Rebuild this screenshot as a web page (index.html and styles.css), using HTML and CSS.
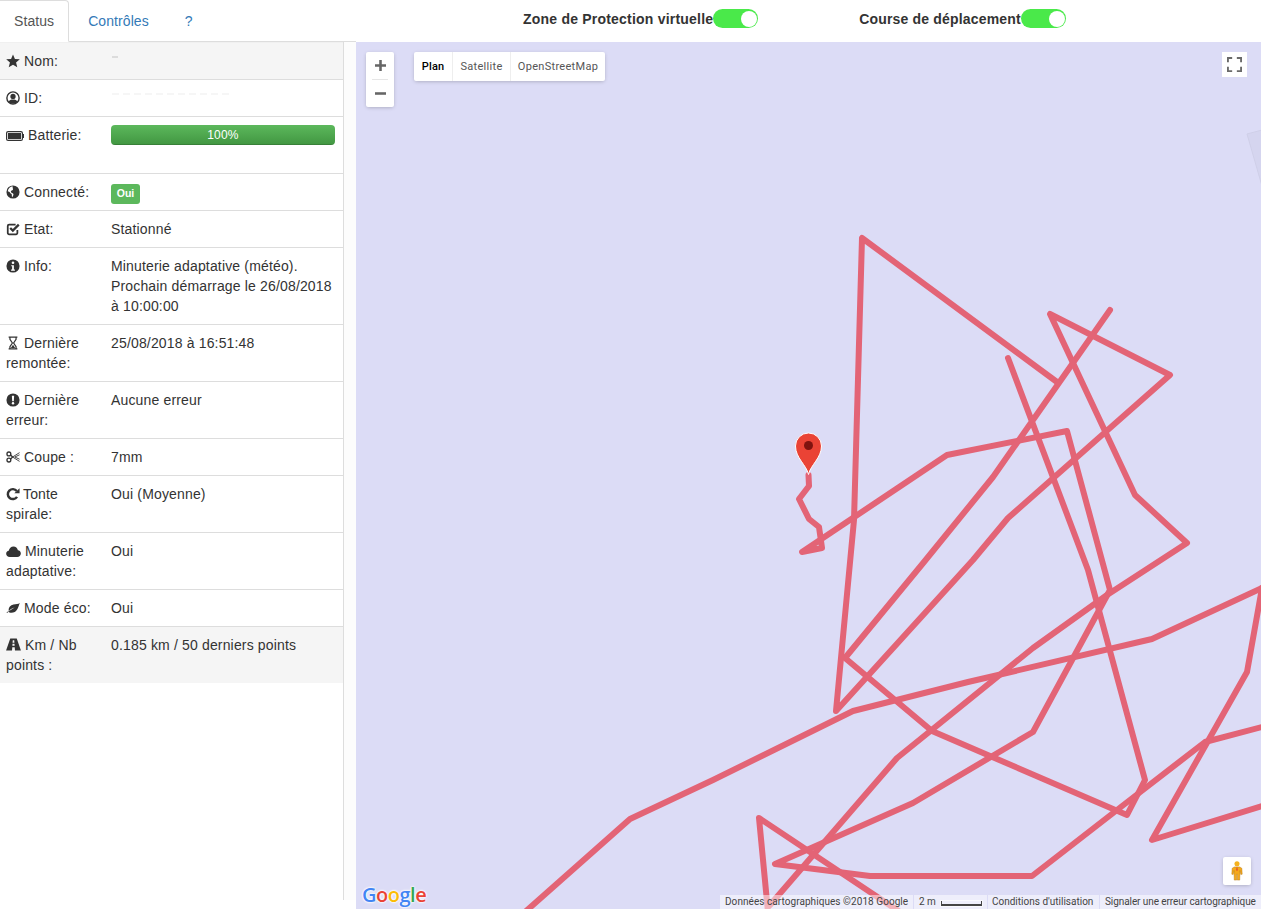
FILE: index.html
```html
<!DOCTYPE html>
<html lang="fr">
<head>
<meta charset="utf-8">
<title>Status</title>
<link rel="stylesheet" href="styles.css">
</head>
<body>
<div class="app">
  <nav class="tabs">
    <a class="tab active">Status</a>
    <a class="tab">Contrôles</a>
    <a class="tab">?</a>
  </nav>
  <header class="switches">
    <div class="switch-item"><b>Zone de Protection virtuelle</b><span class="toggle"><i></i></span></div>
    <div class="switch-item"><b class="tight">Course de déplacement</b><span class="toggle"><i></i></span></div>
  </header>
  <aside class="side">
    <table class="status">
      <tr class="shaded"><td class="key"><svg class="ic" viewBox="0 0 16 16"><polygon points="8,.5 10.2,5.7 15.8,6.1 11.5,9.7 12.9,15.2 8,12.3 3.1,15.2 4.5,9.7 .2,6.1 5.8,5.7"/></svg>Nom:</td><td class="val"><span class="redact-name"></span></td></tr>
      <tr><td class="key"><svg class="ic" viewBox="0 0 16 16"><circle cx="8" cy="8" r="7" fill="none" stroke="currentColor" stroke-width="1.6"/><circle cx="8" cy="6.2" r="3"/><path d="M3 12.6C3.4 10.2 5.8 9.6 8 9.6s4.600.6 5 3A7 7 0 0 1 3 12.600z"/></svg>ID:</td><td class="val"><span class="redact-id"></span></td></tr>
      <tr><td class="key"><svg class="ic ic-batt" viewBox="0 0 18 10"><rect x=".6" y=".6" width="15.800" height="8.800" rx="1.500" fill="none" stroke="currentColor" stroke-width="1.200"/><rect x="2" y="2" width="13" height="6"/><rect x="17" y="3" width="1" height="4"/></svg>Batterie:</td><td class="val"><div class="progress"><div class="bar">100%</div></div></td></tr>
      <tr><td class="key"><svg class="ic" viewBox="0 0 16 16"><circle cx="8" cy="8" r="7.500"/><path fill="#fff" d="M7.500 1.500C5 2 2.500 4 2 7c1 .5 2 .5 2.500 1.500.5 1.500 1.500 1 2 2 .3 1 0 2 .5 3.500.6-1 1.500-2 1.500-3.500 0-1-1.500-1.200-2.500-2-.6-.6-.5-1.500 0-2 .8-.8 1.800-.5 2-1.500.1-.8-.5-1.500-.5-3.500z"/></svg>Connecté:</td><td class="val"><span class="badge">Oui</span></td></tr>
      <tr><td class="key"><svg class="ic" viewBox="0 0 16 16"><path fill="none" stroke="currentColor" stroke-width="2" d="M13 9v3.500A1.500 1.500 0 0 1 11.500 14h-8A1.500 1.500 0 0 1 2 12.500v-8A1.500 1.500 0 0 1 3.500 3H11"/><path fill="none" stroke="currentColor" stroke-width="2.600" d="M4.800 6.800l3 3L14.600 3"/></svg>Etat:</td><td class="val">Stationné</td></tr>
      <tr><td class="key"><svg class="ic" viewBox="0 0 16 16"><circle cx="8" cy="8" r="7.500"/><circle cx="8" cy="4.300" r="1.500" fill="#fff"/><path fill="#fff" d="M6 7h3v5h1.200v1.300H5.800V12H7V8.300H6z"/></svg>Info:</td><td class="val">Minuterie adaptative (météo). Prochain démarrage le 26/08/2018 à 10:00:00</td></tr>
      <tr><td class="key"><svg class="ic" viewBox="0 0 16 16"><path fill="none" stroke="currentColor" stroke-width="1.400" d="M3 1.200h10M3 14.800h10M4.500 1.500v2.300L7.300 8l-2.800 4.200v2.300M11.500 1.500v2.300L8.700 8l2.800 4.200v2.300"/><path d="M5.500 13.800L8 10l2.500 3.800z"/></svg>Dernière remontée:</td><td class="val">25/08/2018 à 16:51:48</td></tr>
      <tr><td class="key"><svg class="ic" viewBox="0 0 16 16"><circle cx="8" cy="8" r="7.500"/><path fill="#fff" d="M6.700 3h2.600l-.4 6.500H7.100z"/><circle cx="8" cy="11.800" r="1.400" fill="#fff"/></svg>Dernière erreur:</td><td class="val">Aucune erreur</td></tr>
      <tr><td class="key"><svg class="ic" viewBox="0 0 16 16"><g fill="none" stroke="currentColor" stroke-width="1.500"><circle cx="3.300" cy="4.500" r="2.200"/><circle cx="3.300" cy="11.500" r="2.200"/><path d="M5 5.500L7.500 8 5 10.500"/></g><g fill="none" stroke="currentColor" stroke-width="1"><path d="M7.500 8L15.500 3M7.500 8l8 5"/><path d="M10 8l5.500-2.500M10 8l5.500 2.500"/></g></svg>Coupe :</td><td class="val">7mm</td></tr>
      <tr><td class="key"><svg class="ic ic-repeat" viewBox="0 0 16 16"><path fill="none" stroke="currentColor" stroke-width="2.800" d="M12.600 11.200A5.700 5.700 0 1 1 12.300 4.600"/><path d="M9.500 7.200h6V1.300z"/></svg>Tonte spirale:</td><td class="val">Oui (Moyenne)</td></tr>
      <tr><td class="key"><svg class="ic ic-cloud" viewBox="0 0 16 12"><path d="M4 12C1.500 12 0 10.400 0 8.500 0 6.800 1.200 5.500 2.800 5.300 3.200 2.600 5.400.5 8 .5c2.400 0 4.300 1.700 4.800 4 1.900.2 3.200 1.700 3.200 3.600 0 2.100-1.600 3.900-4 3.900z"/></svg>Minuterie adaptative:</td><td class="val">Oui</td></tr>
      <tr><td class="key"><svg class="ic" viewBox="0 0 16 12"><path d="M15.800.3C14 1.800 11.500 1.200 8.500 2 5 3 3 5.200 3 8c0 .5.100 1 .3 1.400C5 7.500 7.500 6 10 5.500 7.400 6.800 4 8.900 1.800 11.400L.2 11.700c.9-.6 1.500-1.300 2.100-2C4 12 7.500 11.800 10 10.500c3.500-1.900 4-6 5.800-10.200z"/></svg>Mode éco:</td><td class="val">Oui</td></tr>
      <tr class="shaded"><td class="key"><svg class="ic ic-road" viewBox="0 0 16 14"><path fill-rule="evenodd" d="M4.500 .5h7L16 13.500H9.600L9.300 10H6.700l-.3 3.500H0zM7 5h2l-.2-2.500H7.200zM6.800 8.300h2.400L9.100 6.200H6.900z"/></svg>Km / Nb points :</td><td class="val">0.185 km / 50 derniers points</td></tr>
    </table>
  </aside>
  <main class="map">
    <svg class="canvas" viewBox="356 42 905 867" preserveAspectRatio="none">
      <polygon class="land" points="1247,134 1262,130 1262,186"/>
      <g class="track">
        <polyline points="808.500,475 809,486 799,499 809,519 819,527 822,548 802,552 947,455 1067,431 1110,590 1033,732 913,803 775,864 870,876 1032,876 1117,810 1205,742 1262,727"/>
        <polyline points="1008,358 1088,570 1145,780 1127,815 932,731 845,658 924,562 993,477 1110,310"/>
        <polyline points="1057,382 862,238 854,520 836,711 973,560 1008,518 1170,375 1050,314 1135,495 1187,543 1107,595 1033,648 897,758 770,905"/>
        <polyline points="1262,588 1152,639 968,682 853,711 713,780 630,819 525,912"/>
        <polyline points="1262,588 1247,672 1152,840 1262,806"/>
        <polyline points="768,912 759,818 900,912"/>
      </g>
      <path class="pin" d="M808.500 474.500C806.500 465 795.500 458 795.500 446A13 13 0 0 1 821.500 446C821.500 458 810.500 465 808.500 474.500z"/>
      <circle class="pin-dot" cx="808.500" cy="445.500" r="4.500"/>
    </svg>

    <div class="zoom-ctl">
      <button class="zoom-btn"><svg viewBox="0 0 12 12"><path d="M0 4.600h4.600V0h2.800v4.600H12v2.800H7.400V12H4.600V7.400H0z"/></svg></button>
      <span class="zoom-sep"></span>
      <button class="zoom-btn"><svg viewBox="0 0 12 12"><path d="M0 4.600h12v2.800H0z"/></svg></button>
    </div>

    <div class="maptype">
      <span class="mt mt-plan current">Plan</span>
      <span class="mt mt-sat">Satellite</span>
      <span class="mt mt-osm">OpenStreetMap</span>
    </div>

    <button class="fs"><svg viewBox="0 0 16 16"><path d="M1 5.500V1h4.500M10.500 1H15v4.500M15 10.500V15h-4.500M5.500 15H1v-4.500"/></svg></button>

    <button class="pegman"><svg viewBox="0 0 12 22"><circle cx="6" cy="3" r="2.800" fill="#f5b21f"/><path fill="#f5a81b" stroke="#b5780f" stroke-width=".5" d="M3 6.500h6l2.300 1.500.4 6.500-1.500.3L9.300 10.500 9 21H6.400V14.500H5.600V21H3L2.700 10.500 1.800 14.800.3 14.500.7 8z"/><path fill="#e2582b" d="M5.500 7h1l.5 3-1 1.300L5 10z"/></svg></button>

    <div class="logo"><span class="b">G</span><span class="r">o</span><span class="y">o</span><span class="b">g</span><span class="g">l</span><span class="r">e</span></div>

    <div class="attrib">
      <span class="seg seg-data">Données cartographiques ©2018 Google</span>
      <span class="seg seg-scale">2 m<i class="scale"></i></span>
      <span class="seg seg-terms">Conditions d'utilisation</span>
      <span class="seg seg-report">Signaler une erreur cartographique</span>
    </div>
  </main>
</div>
</body>
</html>
```

FILE: styles.css
```css
* { box-sizing: border-box; }
html, body { margin: 0; padding: 0; background: #fff; }
body { font-family: "Liberation Sans", Arial, sans-serif; font-size: 14px; line-height: 20px; color: #333; }

.app {
  display: grid;
  grid-template-columns: 356px 905px;
  grid-template-rows: 42px 867px;
  width: 1277px;
}

/* tabs */
.tabs { display: flex; gap: 2px; border-bottom: 1px solid #ddd; height: 42px; padding: 0; letter-spacing: .08px; }
.tab {
  display: block; height: 41px; padding: 10px 16px; color: #337ab7;
  border: 1px solid transparent; border-radius: 0 4px 0 0;
}
.tab.active {
  color: #555; background: #fff; padding-left: 14px; padding-right: 14px; height: 42px;
  border: 1px solid #ddd; border-left: 0; border-bottom-color: #fff;
}

/* switches */
.switches { display: flex; gap: 101px; padding: 9px 0 0 167px; }
.switch-item { display: flex; height: 19px; align-items: center; color: #333; }
.switch-item b { font-weight: 700; letter-spacing: .21px; }
.switch-item b.tight { letter-spacing: .17px; }
.toggle { display: block; position: relative; width: 45px; height: 19px; border-radius: 10px; background: #4ae94a; }
.toggle i { position: absolute; right: 1px; top: 1.500px; width: 16px; height: 16px; border-radius: 50%; background: #fff; }

/* left panel */
.side { background: #fcfcfc; height: 858px; }
.status {
  width: 344px; height: 100%; display: block; background: #fff; border-right: 1px solid #ddd;
  border-collapse: separate; border-spacing: 0; letter-spacing: .16px;
}
.status tbody { display: block; width: 343px; }
.status tr { display: flex; }
.status td { border-top: 1px solid #ddd; padding-top: 8px; padding-bottom: 8px; vertical-align: top; }
.status tr:first-child td { border-top-color: #f0f0f0; }
.key { width: 103px; flex: none; padding-left: 6px; padding-right: 8px; }
.val { flex: 1; padding-left: 8px; padding-right: 8px; }
.shaded td { background: #f5f5f5; }

.ic { display: inline-block; width: 14px; height: 14px; fill: currentColor; color: #333; margin-right: 4px; vertical-align: -2px; }
.ic-batt { width: 18px; height: 10px; vertical-align: -1px; }
.ic-repeat { margin-right: 3px; }
.ic-cloud { width: 15px; height: 11px; margin-right: 4px; vertical-align: -1px; }
.ic-road { width: 15px; height: 13px; vertical-align: -1px; }

.redact-name { display: block; width: 6px; height: 2px; margin: 5px 0 0 1px; background: #dcdcdc; }
.redact-id { display: block; width: 118px; height: 2px; margin: 5px 0 0 1px;
  background: repeating-linear-gradient(90deg, #f6f6f6 0 7px, #fff 7px 11px); }

.progress { height: 20px; margin-bottom: 20px; border-radius: 4px; overflow: hidden; background: #ebebeb; }
.bar {
  height: 20px; text-align: center; color: #fff; font-size: 12px; line-height: 20px; letter-spacing: .2px;
  background: linear-gradient(to bottom, #5cb85c, #419641);
  box-shadow: inset 0 -1px 0 rgba(0,0,0,.15);
}
.badge {
  display: block; width: 29px; height: 20px; border-radius: 3px; background: #5cb85c; color: #fff;
  font-size: 10.500px; font-weight: 700; line-height: 19px; text-align: center; margin: 2px 0 -2px;
  letter-spacing: 0;
}

/* map */
.map { position: relative; overflow: hidden; background: #dcdcf6; }
.canvas { position: absolute; left: 0; top: 0; width: 905px; height: 867px; display: block; }
.land { fill: #d5d5ef; stroke: #cfcfe8; stroke-width: 1; }
.track polyline { fill: none; stroke: #e36476; stroke-width: 6; stroke-linejoin: round; stroke-linecap: round; }
.pin { fill: #ea4335; stroke: #fff; stroke-width: 1; }
.pin-dot { fill: #7f130f; }

.zoom-ctl, .maptype, .fs, .pegman, .logo, .attrib { position: absolute; }
.zoom-ctl {
  left: 10px; top: 10px; width: 28px; height: 55px; background: #fff; border-radius: 2px;
  box-shadow: 0 1px 4px -1px rgba(0,0,0,.3); display: flex; flex-direction: column; align-items: center;
}
.zoom-btn { width: 28px; height: 27px; border: 0; padding: 0; background: none; display: flex; align-items: center; justify-content: center; }
.zoom-btn svg { width: 11px; height: 11px; fill: #666; display: block; }
.zoom-sep { width: 16px; height: 1px; background: #e6e6e6; }

.maptype {
  left: 58px; top: 10px; height: 29px; width: 191px; display: flex; background: #fff; border-radius: 2px;
  box-shadow: 0 1px 4px -1px rgba(0,0,0,.3);
  font-family: Roboto, Arial, sans-serif; font-size: 11px; line-height: 29px; color: #565656; letter-spacing: .3px;
}
.mt { text-align: center; border-left: 1px solid #eee; }
.mt-plan { width: 38px; border-left: 0; }
.mt-sat { width: 58px; }
.mt-osm { width: 95px; }
.mt.current { color: #000; font-weight: 500; letter-spacing: .1px; }

.fs { right: 14px; top: 10px; width: 25px; height: 25px; background: #fff; border: 0; padding: 5px; display: block; }
.fs svg { width: 15px; height: 15px; display: block; fill: none; stroke: #6a6a6a; stroke-width: 2; }

.pegman {
  right: 10px; top: 815px; width: 28px; height: 28px; background: #fff; border: 0; border-radius: 2px; padding: 4px 8px;
  box-shadow: 0 1px 4px -1px rgba(0,0,0,.3); display: block;
}
.pegman svg { width: 12px; height: 20px; display: block; }

.logo {
  left: 6px; top: 840px; font-family: "Open Sans", Arial, sans-serif; font-size: 20px; line-height: 26px; font-weight: 600;
  letter-spacing: -.5px;
  text-shadow: 0 0 2px #fff, 0 0 2px #fff, 0 0 3px #fff;
}
.logo .b { color: #4285f4; } .logo .r { color: #ea4335; } .logo .y { color: #fbbc05; } .logo .g { color: #34a853; }

.attrib {
  right: 0; bottom: 0; height: 14px; display: flex; gap: 1px;
  font-family: Roboto, Arial, sans-serif; font-size: 10px; line-height: 14px; color: #444;
}
.seg { display: flex; align-items: center; background: rgba(255,255,255,.5); padding: 0 0 0 5px; white-space: nowrap; }
.seg-data { width: 193px; letter-spacing: .06px; }
.seg-scale { width: 73px; }
.seg-terms { width: 111px; padding-left: 4px; }
.seg-report { width: 161px; letter-spacing: -.08px; }
.scale {
  display: block; width: 41px; height: 5px; margin-left: 5px; margin-top: 2px;
  border: solid #444; border-width: 0 1px 2px 1px; box-shadow: 0 0 0 1px rgba(255,255,255,.6);
}
```
